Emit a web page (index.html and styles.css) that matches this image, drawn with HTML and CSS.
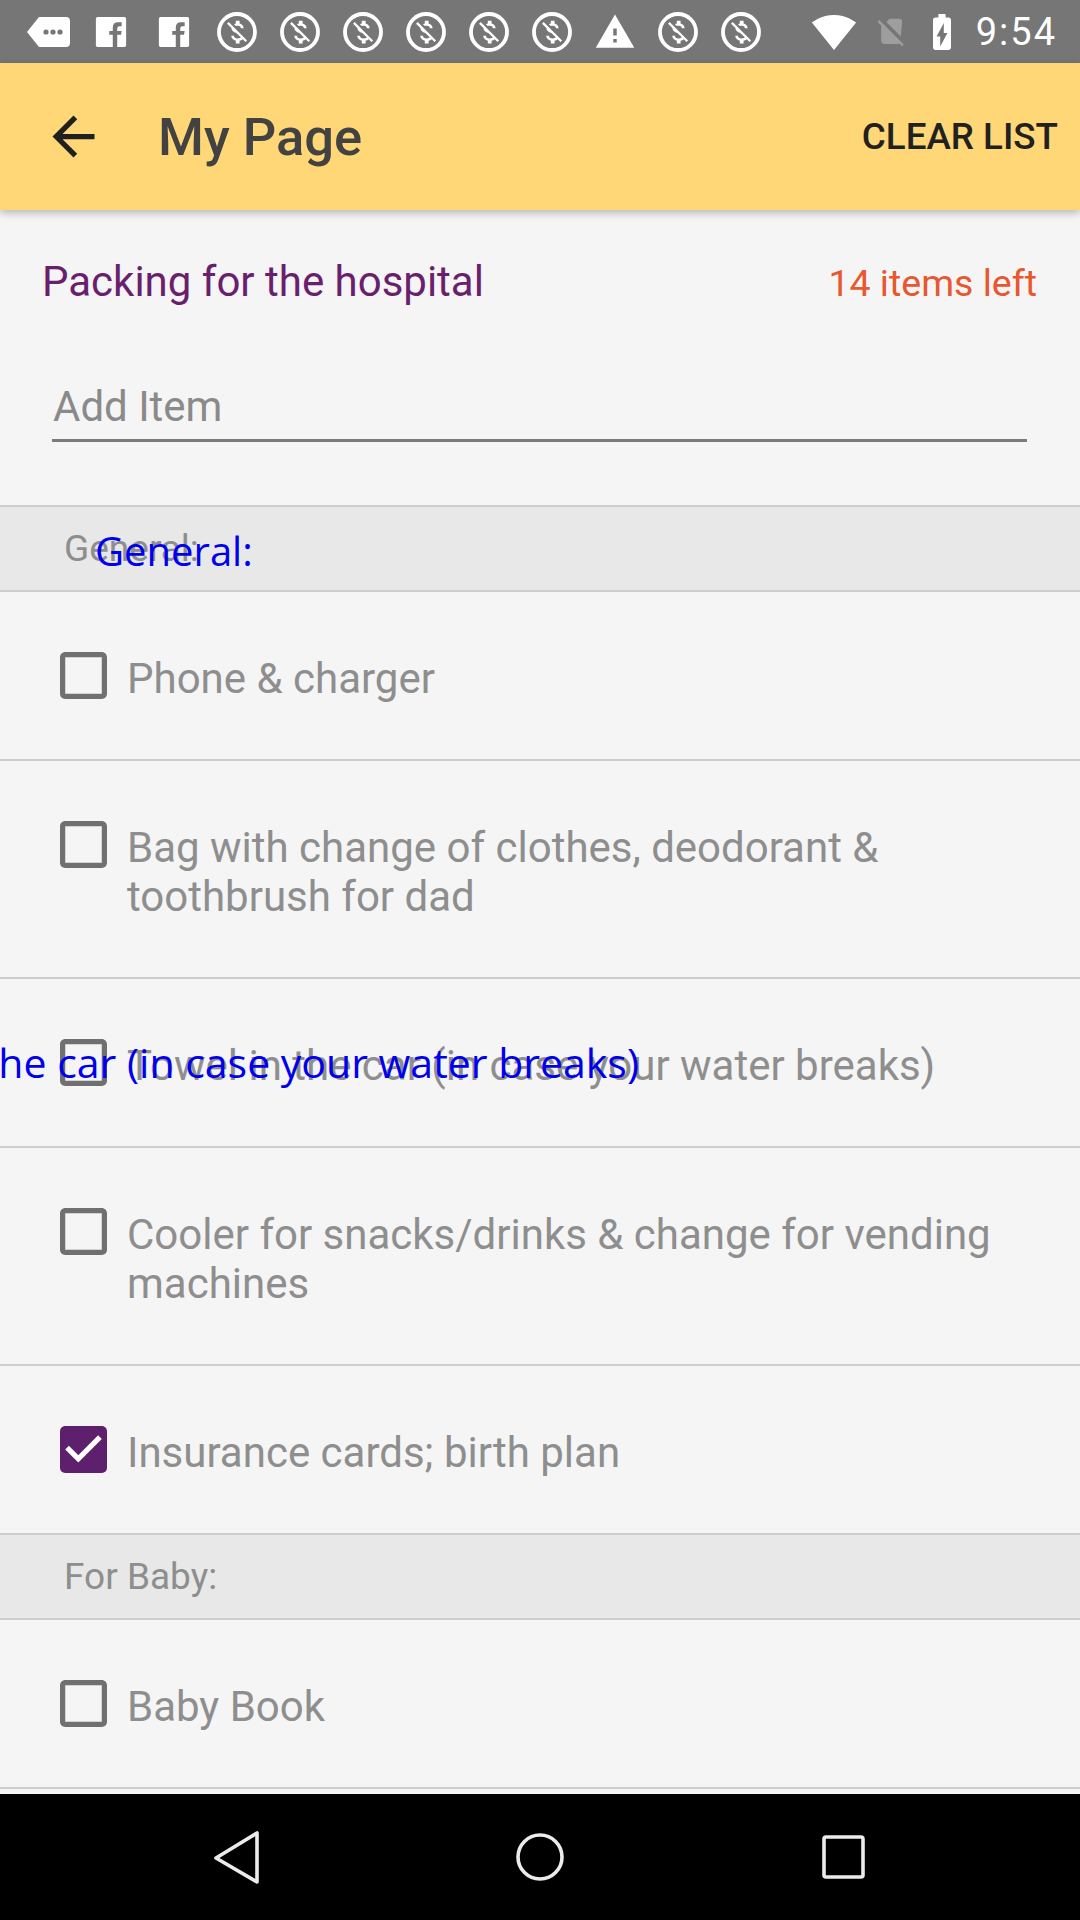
FILE: index.html
```html
<!DOCTYPE html>
<html>
<head>
<meta charset="utf-8">
<link rel="stylesheet" href="styles.css">
</head>
<body>
<div class="status">
  <div class="notifs">
    <span class="slot"><svg class="ic-tag" viewBox="0 0 44 34"><path d="M13 2H40a4 4 0 0 1 4 4V28a4 4 0 0 1-4 4H13L1 17Z" fill="#fff"/><circle cx="20" cy="17" r="2.6" fill="#767676"/><circle cx="27" cy="17" r="2.6" fill="#767676"/><circle cx="34" cy="17" r="2.6" fill="#767676"/></svg></span>
    <span class="slot"><svg class="ic-fb" viewBox="0 0 36 36"><rect x="1" y="1" width="34" height="34" rx="2" fill="#fff"/><path d="M20 35V21H16V17H20V13Q20 7 26 7H30V11.5H27.5Q25 11.5 25 14V17H30L29.3 21H25V35Z" fill="#767676"/></svg></span>
    <span class="slot"><svg class="ic-fb" viewBox="0 0 36 36"><rect x="1" y="1" width="34" height="34" rx="2" fill="#fff"/><path d="M20 35V21H16V17H20V13Q20 7 26 7H30V11.5H27.5Q25 11.5 25 14V17H30L29.3 21H25V35Z" fill="#767676"/></svg></span>
    <span class="slot"><svg class="ic" viewBox="0 0 24 24"><circle cx="12" cy="12" r="10.3" fill="none" stroke="#fff" stroke-width="2.2"/><path transform="translate(3.4 3.4) scale(0.72)" fill="#fff" d="M12.5 6.9c1.78 0 2.44.85 2.5 2.1h2.21c-.07-1.72-1.12-3.3-3.21-3.81V3h-3v2.16c-.53.12-1.03.3-1.48.54l1.47 1.47c.41-.17.91-.27 1.51-.27zM5.33 4.06L4.06 5.33 7.5 8.77c0 2.08 1.56 3.21 3.91 3.91l3.51 3.51c-.34.48-1.05.91-2.42.91-2.06 0-2.87-.92-2.98-2.1h-2.2c.12 2.19 1.76 3.42 3.68 3.83V21h3v-2.15c.96-.18 1.82-.55 2.45-1.12l2.22 2.22 1.27-1.27L5.33 4.06z"/></svg></span>
    <span class="slot"><svg class="ic" viewBox="0 0 24 24"><circle cx="12" cy="12" r="10.3" fill="none" stroke="#fff" stroke-width="2.2"/><path transform="translate(3.4 3.4) scale(0.72)" fill="#fff" d="M12.5 6.9c1.78 0 2.44.85 2.5 2.1h2.21c-.07-1.72-1.12-3.3-3.21-3.81V3h-3v2.16c-.53.12-1.03.3-1.48.54l1.47 1.47c.41-.17.91-.27 1.51-.27zM5.33 4.06L4.06 5.33 7.5 8.77c0 2.08 1.56 3.21 3.91 3.91l3.51 3.51c-.34.48-1.05.91-2.42.91-2.06 0-2.87-.92-2.98-2.1h-2.2c.12 2.19 1.76 3.42 3.68 3.83V21h3v-2.15c.96-.18 1.82-.55 2.45-1.12l2.22 2.22 1.27-1.27L5.33 4.06z"/></svg></span>
    <span class="slot"><svg class="ic" viewBox="0 0 24 24"><circle cx="12" cy="12" r="10.3" fill="none" stroke="#fff" stroke-width="2.2"/><path transform="translate(3.4 3.4) scale(0.72)" fill="#fff" d="M12.5 6.9c1.78 0 2.44.85 2.5 2.1h2.21c-.07-1.72-1.12-3.3-3.21-3.81V3h-3v2.16c-.53.12-1.03.3-1.48.54l1.47 1.47c.41-.17.91-.27 1.51-.27zM5.33 4.06L4.06 5.33 7.5 8.77c0 2.08 1.56 3.21 3.91 3.91l3.51 3.51c-.34.48-1.05.91-2.42.91-2.06 0-2.87-.92-2.98-2.1h-2.2c.12 2.19 1.76 3.42 3.68 3.83V21h3v-2.15c.96-.18 1.82-.55 2.45-1.12l2.22 2.22 1.27-1.27L5.33 4.06z"/></svg></span>
    <span class="slot"><svg class="ic" viewBox="0 0 24 24"><circle cx="12" cy="12" r="10.3" fill="none" stroke="#fff" stroke-width="2.2"/><path transform="translate(3.4 3.4) scale(0.72)" fill="#fff" d="M12.5 6.9c1.78 0 2.44.85 2.5 2.1h2.21c-.07-1.72-1.12-3.3-3.21-3.81V3h-3v2.16c-.53.12-1.03.3-1.48.54l1.47 1.47c.41-.17.91-.27 1.51-.27zM5.33 4.06L4.06 5.33 7.5 8.77c0 2.08 1.56 3.21 3.91 3.91l3.51 3.51c-.34.48-1.05.91-2.42.91-2.06 0-2.87-.92-2.98-2.1h-2.2c.12 2.19 1.76 3.42 3.68 3.83V21h3v-2.15c.96-.18 1.82-.55 2.45-1.12l2.22 2.22 1.27-1.27L5.33 4.06z"/></svg></span>
    <span class="slot"><svg class="ic" viewBox="0 0 24 24"><circle cx="12" cy="12" r="10.3" fill="none" stroke="#fff" stroke-width="2.2"/><path transform="translate(3.4 3.4) scale(0.72)" fill="#fff" d="M12.5 6.9c1.78 0 2.44.85 2.5 2.1h2.21c-.07-1.72-1.12-3.3-3.21-3.81V3h-3v2.16c-.53.12-1.03.3-1.48.54l1.47 1.47c.41-.17.91-.27 1.51-.27zM5.33 4.06L4.06 5.33 7.5 8.77c0 2.08 1.56 3.21 3.91 3.91l3.51 3.51c-.34.48-1.05.91-2.42.91-2.06 0-2.87-.92-2.98-2.1h-2.2c.12 2.19 1.76 3.42 3.68 3.83V21h3v-2.15c.96-.18 1.82-.55 2.45-1.12l2.22 2.22 1.27-1.27L5.33 4.06z"/></svg></span>
    <span class="slot"><svg class="ic" viewBox="0 0 24 24"><circle cx="12" cy="12" r="10.3" fill="none" stroke="#fff" stroke-width="2.2"/><path transform="translate(3.4 3.4) scale(0.72)" fill="#fff" d="M12.5 6.9c1.78 0 2.44.85 2.5 2.1h2.21c-.07-1.72-1.12-3.3-3.21-3.81V3h-3v2.16c-.53.12-1.03.3-1.48.54l1.47 1.47c.41-.17.91-.27 1.51-.27zM5.33 4.06L4.06 5.33 7.5 8.77c0 2.08 1.56 3.21 3.91 3.91l3.51 3.51c-.34.48-1.05.91-2.42.91-2.06 0-2.87-.92-2.98-2.1h-2.2c.12 2.19 1.76 3.42 3.68 3.83V21h3v-2.15c.96-.18 1.82-.55 2.45-1.12l2.22 2.22 1.27-1.27L5.33 4.06z"/></svg></span>
    <span class="slot"><svg class="ic" viewBox="0 0 24 24"><path fill="#fff" d="M1 21h22L12 2 1 21zm12-3h-2v-2h2v2zm0-4h-2v-4h2v4z"/></svg></span>
    <span class="slot"><svg class="ic" viewBox="0 0 24 24"><circle cx="12" cy="12" r="10.3" fill="none" stroke="#fff" stroke-width="2.2"/><path transform="translate(3.4 3.4) scale(0.72)" fill="#fff" d="M12.5 6.9c1.78 0 2.44.85 2.5 2.1h2.21c-.07-1.72-1.12-3.3-3.21-3.81V3h-3v2.16c-.53.12-1.03.3-1.48.54l1.47 1.47c.41-.17.91-.27 1.51-.27zM5.33 4.06L4.06 5.33 7.5 8.77c0 2.08 1.56 3.21 3.91 3.91l3.51 3.51c-.34.48-1.05.91-2.42.91-2.06 0-2.87-.92-2.98-2.1h-2.2c.12 2.19 1.76 3.42 3.68 3.83V21h3v-2.15c.96-.18 1.82-.55 2.45-1.12l2.22 2.22 1.27-1.27L5.33 4.06z"/></svg></span>
    <span class="slot"><svg class="ic" viewBox="0 0 24 24"><circle cx="12" cy="12" r="10.3" fill="none" stroke="#fff" stroke-width="2.2"/><path transform="translate(3.4 3.4) scale(0.72)" fill="#fff" d="M12.5 6.9c1.78 0 2.44.85 2.5 2.1h2.21c-.07-1.72-1.12-3.3-3.21-3.81V3h-3v2.16c-.53.12-1.03.3-1.48.54l1.47 1.47c.41-.17.91-.27 1.51-.27zM5.33 4.06L4.06 5.33 7.5 8.77c0 2.08 1.56 3.21 3.91 3.91l3.51 3.51c-.34.48-1.05.91-2.42.91-2.06 0-2.87-.92-2.98-2.1h-2.2c.12 2.19 1.76 3.42 3.68 3.83V21h3v-2.15c.96-.18 1.82-.55 2.45-1.12l2.22 2.22 1.27-1.27L5.33 4.06z"/></svg></span>
  </div>
  <div class="sys">
    <svg class="ic-wifi" viewBox="0 2 24 20"><path fill="#fff" d="M12.01 21.49L23.64 7c-.45-.34-4.93-4-11.64-4C5.28 3 .81 6.66.36 7l11.63 14.49.01.01.01-.01z"/></svg>
    <svg class="ic-sim" viewBox="2 2 20 21"><path fill="#9e9e9e" d="M19.99 5c0-1.1-.89-2-1.99-2h-7L8.66 5.34 19 15.68 19.99 5zM3.65 3.88L2.38 5.15 5 7.77V19c0 1.1.9 2 2 2h10.01c.35 0 .67-.1.96-.26l1.88 1.88 1.27-1.27L3.65 3.88z"/></svg>
    <svg class="ic-bat" viewBox="7 2 10 20"><path fill="#fff" d="M15.67 4H14V2h-4v2H8.33C7.6 4 7 4.6 7 5.33v15.33C7 21.4 7.6 22 8.33 22h7.33c.74 0 1.34-.6 1.34-1.33V5.33C17 4.6 16.4 4 15.67 4zM11 20v-5.5H9L13 7v5.5h2L11 20z"/></svg>
    <span class="clock">9:54</span>
  </div>
</div>

<div class="appbar">
  <svg class="back" viewBox="0 0 24 24"><path fill="#1f1f1f" d="M20 11H7.83l5.59-5.59L12 4l-8 8 8 8 1.41-1.41L7.83 13H20v-2z"/></svg>
  <div class="title">My Page</div>
  <div class="action">CLEAR LIST</div>
</div>

<main class="content">
  <div class="head">
    <span class="name">Packing for the hospital</span>
    <span class="count">14 items left</span>
  </div>
  <div class="add">Add Item</div>

  <div class="list">
    <div class="section">General:<span class="overlay ov-section">General:</span></div>

    <div class="item">
      <svg class="cb" viewBox="3 3 18 18"><path fill="#707070" d="M19 5v14H5V5h14m0-2H5c-1.1 0-2 .9-2 2v14c0 1.1.9 2 2 2h14c1.1 0 2-.9 2-2V5c0-1.1-.9-2-2-2z"/></svg>
      <div class="txt">Phone &amp; charger</div>
    </div>
    <div class="item">
      <svg class="cb" viewBox="3 3 18 18"><path fill="#707070" d="M19 5v14H5V5h14m0-2H5c-1.1 0-2 .9-2 2v14c0 1.1.9 2 2 2h14c1.1 0 2-.9 2-2V5c0-1.1-.9-2-2-2z"/></svg>
      <div class="txt">Bag with change of clothes, deodorant &amp; toothbrush for dad</div>
    </div>
    <div class="item">
      <svg class="cb" viewBox="3 3 18 18"><path fill="#707070" d="M19 5v14H5V5h14m0-2H5c-1.1 0-2 .9-2 2v14c0 1.1.9 2 2 2h14c1.1 0 2-.9 2-2V5c0-1.1-.9-2-2-2z"/></svg>
      <div class="txt">Towel in the car (in case your water breaks)</div>
      <span class="overlay ov-item">Towel in the car (in case your water breaks)</span>
    </div>
    <div class="item">
      <svg class="cb" viewBox="3 3 18 18"><path fill="#707070" d="M19 5v14H5V5h14m0-2H5c-1.1 0-2 .9-2 2v14c0 1.1.9 2 2 2h14c1.1 0 2-.9 2-2V5c0-1.1-.9-2-2-2z"/></svg>
      <div class="txt">Cooler for snacks/drinks &amp; change for vending machines</div>
    </div>
    <div class="item">
      <svg class="cb" viewBox="3 3 18 18"><path fill="#5e1f6c" d="M19 3H5c-1.11 0-2 .9-2 2v14c0 1.1.89 2 2 2h14c1.11 0 2-.9 2-2V5c0-1.1-.89-2-2-2z"/><path fill="#fff" d="M10 17l-5-5 1.41-1.41L10 14.17l7.59-7.59L19 8l-9 9z"/></svg>
      <div class="txt">Insurance cards; birth plan</div>
    </div>

    <div class="section">For Baby:</div>

    <div class="item">
      <svg class="cb" viewBox="3 3 18 18"><path fill="#707070" d="M19 5v14H5V5h14m0-2H5c-1.1 0-2 .9-2 2v14c0 1.1.9 2 2 2h14c1.1 0 2-.9 2-2V5c0-1.1-.9-2-2-2z"/></svg>
      <div class="txt">Baby Book</div>
    </div>
  </div>
</main>

<div class="navbar">
  <svg class="nav-ic" viewBox="0 0 60 60"><path d="M51 6V55L10 31Z" fill="none" stroke="#ececec" stroke-width="3.6" stroke-linejoin="round"/></svg>
  <svg class="nav-ic" viewBox="0 0 60 60"><circle cx="30" cy="30" r="22" fill="none" stroke="#ececec" stroke-width="3.6"/></svg>
  <svg class="nav-ic" viewBox="0 0 60 60"><rect x="10" y="10" width="39" height="40" rx="2" fill="none" stroke="#ececec" stroke-width="3.6"/></svg>
</div>
</body>
</html>
```

FILE: styles.css
```css
* { box-sizing: border-box; }

html, body {
  margin: 0;
  padding: 0;
}

body {
  width: 1080px;
  height: 1920px;
  overflow: hidden;
  background: #f5f5f5;
  font-family: Roboto, "Noto Sans", "Liberation Sans", sans-serif;
  display: flex;
  flex-direction: column;
}

/* status bar */
.status {
  height: 63px;
  flex: none;
  background: #767676;
  display: flex;
  align-items: center;
  padding: 0 23px 0 16px;
}

.notifs {
  display: flex;
  align-items: center;
}

.slot {
  width: 63px;
  height: 63px;
  display: flex;
  align-items: center;
  justify-content: center;
}

.ic-tag { width: 44px; height: 34px; }
.ic-fb { width: 32px; height: 34px; }
.ic { width: 42px; height: 42px; }

.sys {
  margin-left: auto;
  display: flex;
  align-items: center;
}

.ic-wifi { width: 46px; height: 38px; }
.ic-sim { width: 28px; height: 30px; margin-left: 20px; }
.ic-bat { width: 18px; height: 36px; margin-left: 28px; }

.clock {
  margin-left: 25px;
  color: #fff;
  font-size: 38px;
  letter-spacing: 2px;
  line-height: 1;
}

/* app bar */
.appbar {
  height: 147px;
  flex: none;
  background: #ffd776;
  display: flex;
  align-items: center;
  position: relative;
  z-index: 2;
  box-shadow: 0 3px 8px rgba(0, 0, 0, 0.26);
}

.back {
  width: 63px;
  height: 63px;
  margin-left: 42px;
  flex: none;
}

.title {
  margin-left: 53px;
  font-size: 52.5px;
  font-weight: 500;
  color: #424242;
}

.action {
  margin-left: auto;
  margin-right: 22px;
  font-size: 36.75px;
  font-weight: 500;
  color: #212121;
}

/* content */
.content {
  flex: 1;
  overflow: hidden;
}

.head {
  display: flex;
  justify-content: space-between;
  align-items: baseline;
  padding: 47px 43px 0 42px;
  line-height: 50px;
}

.name { color: #6a1f6e; font-size: 42px; }
.count { color: #e8572f; font-size: 37.5px; }

.add {
  margin: 74px 53px 0 52px;
  padding: 0 0 7px 1px;
  border-bottom: 3px solid #7b7b7b;
  font-size: 42px;
  line-height: 50px;
  color: #8a8a8a;
}

.list {
  margin-top: 63px;
  border-top: 2px solid #cdcdcd;
}

.section {
  position: relative;
  height: 85px;
  background: #e8e8e8;
  border-bottom: 2px solid #cdcdcd;
  display: flex;
  align-items: center;
  padding-left: 64px;
  font-size: 37px;
  color: #8e8e8e;
}

.item {
  position: relative;
  display: flex;
  align-items: flex-start;
  padding: 59px 42px 56px 60px;
  border-bottom: 2px solid #cdcdcd;
  font-size: 42px;
  line-height: 49px;
  color: #8e8e8e;
}

.cb {
  width: 47px;
  height: 47px;
  flex: none;
  margin-top: 1px;
  margin-right: 20px;
}

.txt {
  flex: 1;
  margin-top: 3px;
}

/* accessibility-style overlay labels */
.overlay {
  position: absolute;
  white-space: nowrap;
  color: #0000ee;
  font-family: "Open Sans", "Noto Sans", sans-serif;
  font-size: 40px;
}

.ov-section {
  left: 95px;
  top: 16px;
  line-height: 56px;
}

.ov-item {
  right: 441px;
  top: 59px;
  font-size: 41px;
  line-height: 49px;
}

/* nav bar */
.navbar {
  height: 126px;
  flex: none;
  background: #000;
  display: flex;
  align-items: center;
  justify-content: center;
  gap: 244px;
}

.nav-ic {
  width: 60px;
  height: 60px;
}
```
